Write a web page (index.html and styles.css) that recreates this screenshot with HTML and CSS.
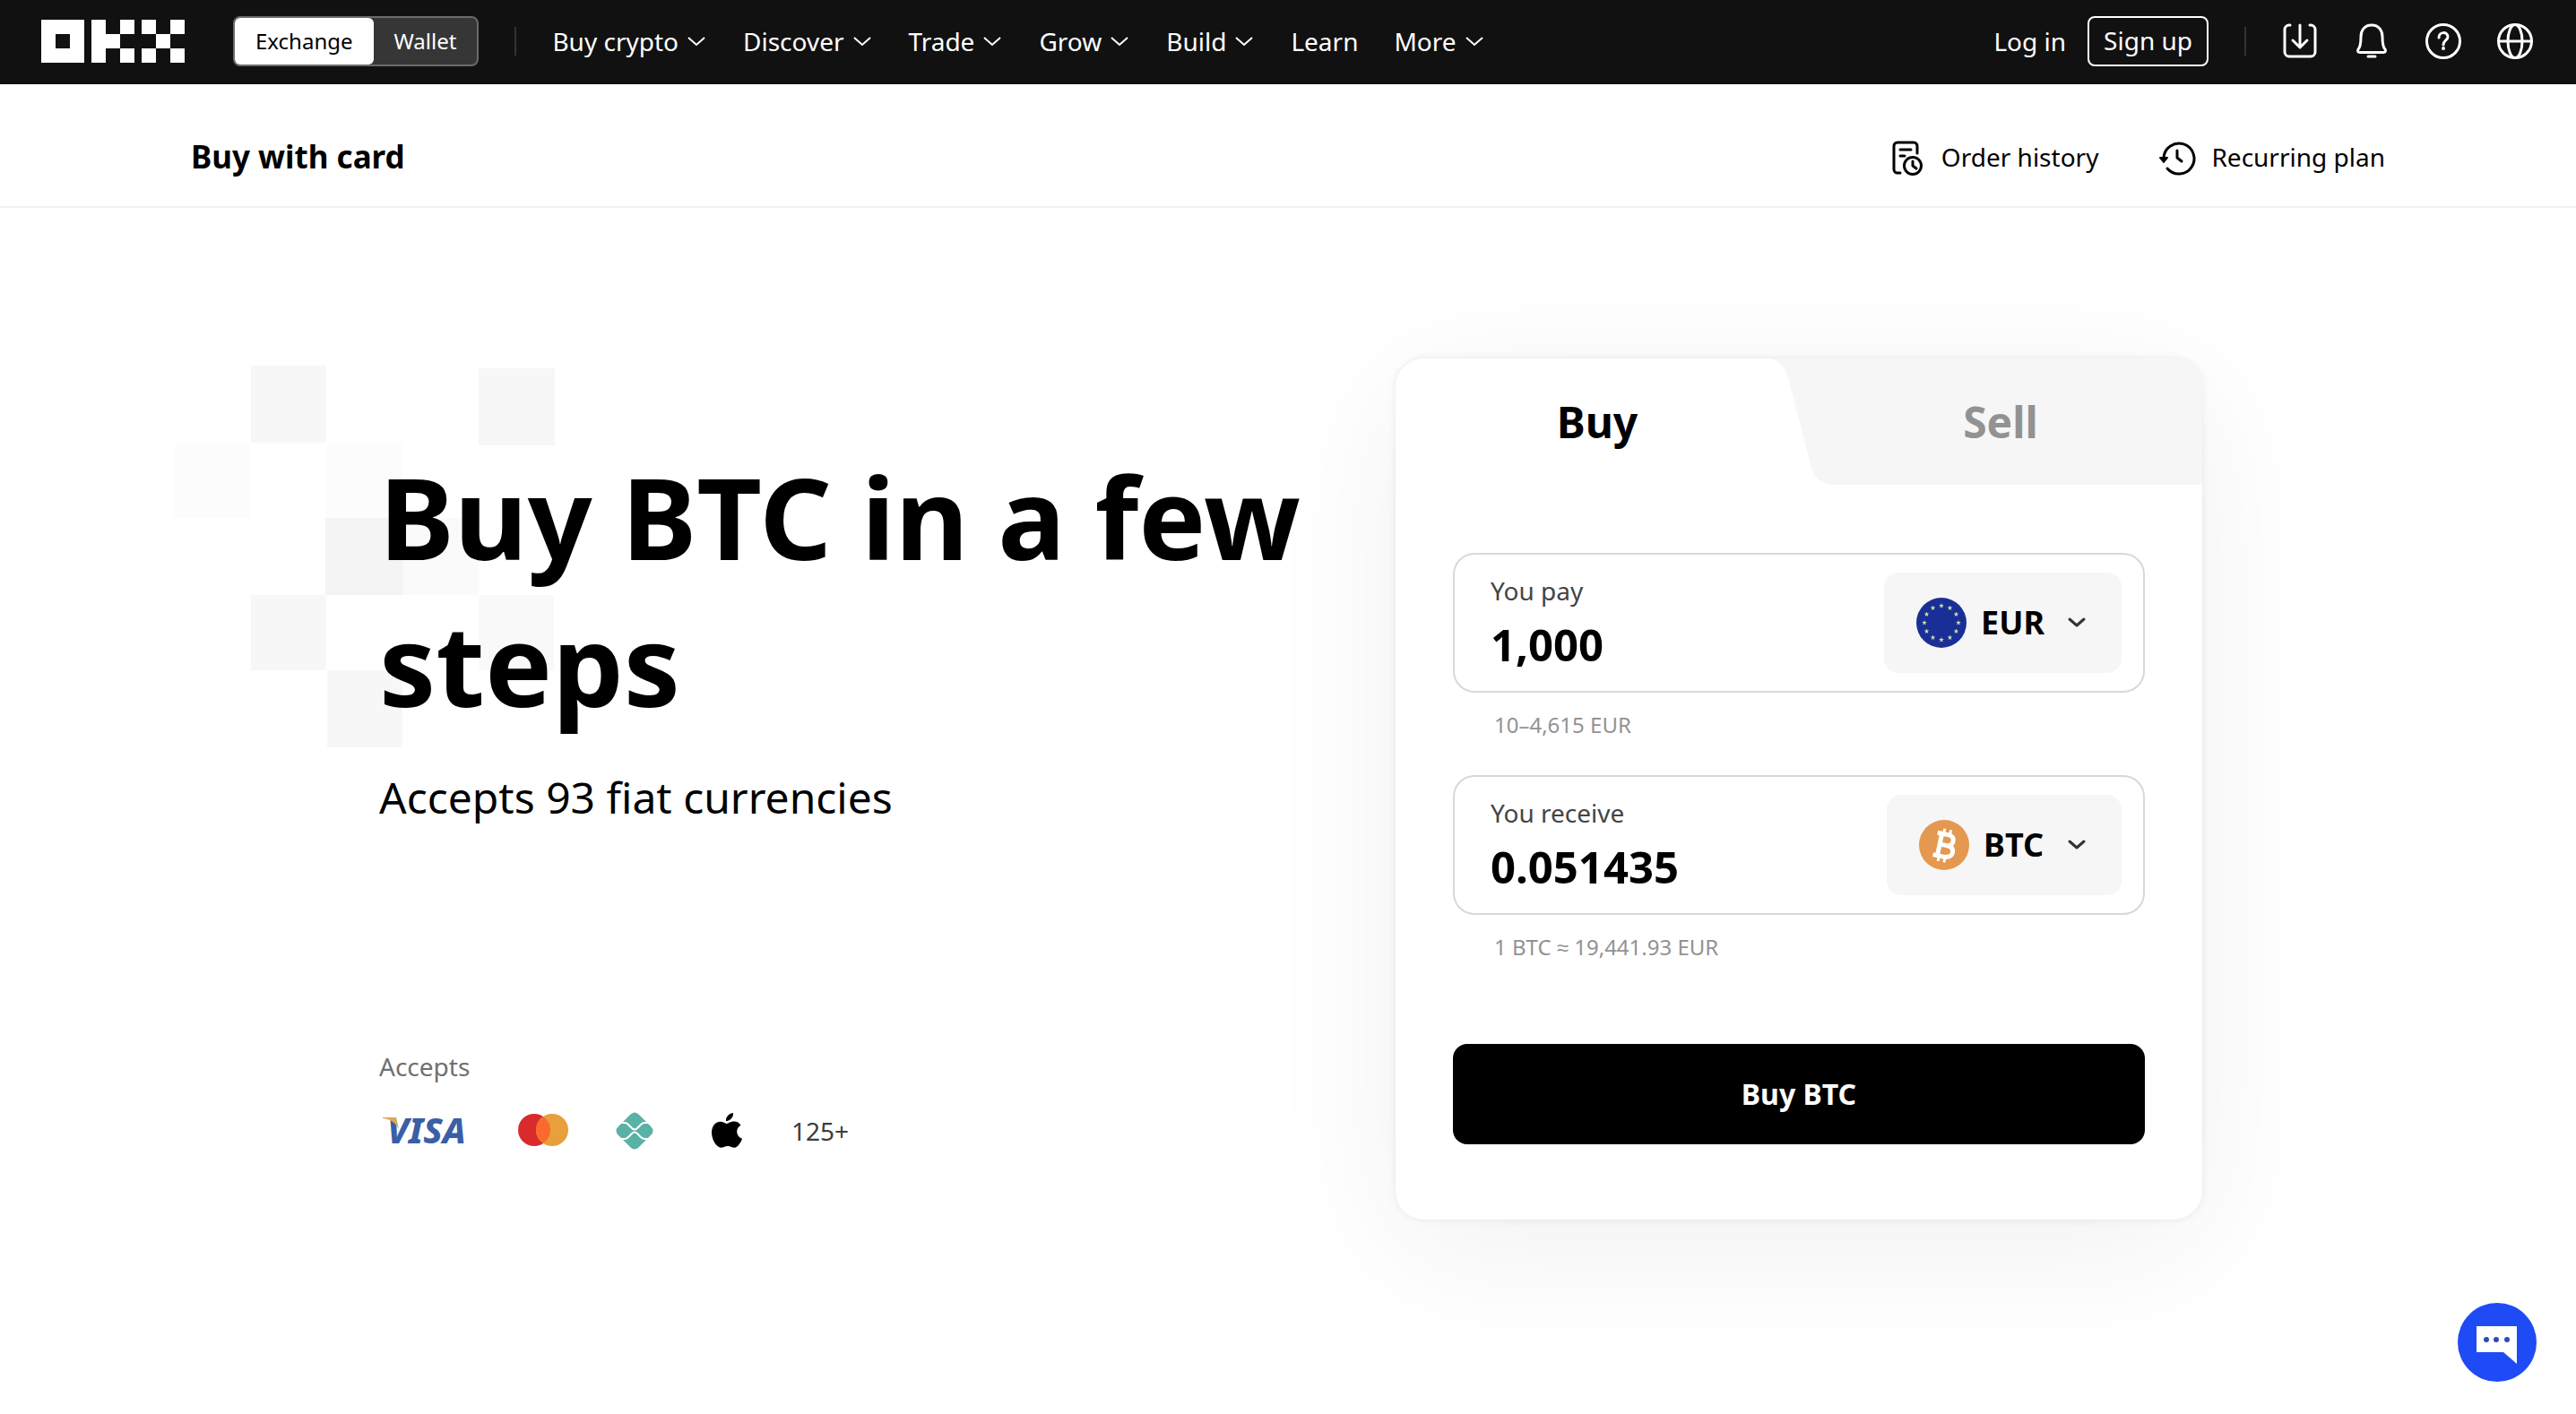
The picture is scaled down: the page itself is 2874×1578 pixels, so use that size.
FILE: index.html
```
<!DOCTYPE html>
<html lang="en">
<head>
  <meta charset="UTF-8">
  <meta name="viewport" content="width=device-width, initial-scale=1">
  <title>Buy BTC | OKX</title>
  <link rel="stylesheet" href="styles.css">
</head>
<body>
  <svg class="defs" aria-hidden="true">
    <symbol id="chevron" viewBox="0 0 24 24">
      <path d="M3 8l9 8 9-8" fill="none" stroke="currentColor" stroke-width="2"/>
    </symbol>
    <symbol id="chevron-bold" viewBox="0 0 32 32">
      <path d="M8 12l8 7 8-7" fill="none" stroke="currentColor" stroke-width="3" stroke-linecap="round" stroke-linejoin="round"/>
    </symbol>
    <symbol id="star" viewBox="-10 -10 20 20">
      <path d="M0-10L2.4-3.2 9.5-3.1 3.8 1.2 5.9 8.1 0 4-5.9 8.1-3.8 1.2-9.5-3.1-2.4-3.2z"/>
    </symbol>
  </svg>

  <header class="navbar">
    <a href="#" class="logo" aria-label="OKX">
      <svg width="160" height="48" viewBox="0 0 160 48" fill="#fff" shape-rendering="crispEdges">
        <path d="M0 0h48v48H0zM16 16v16h16V16z" fill-rule="evenodd"/>
        <path d="M56 0h16v16h16v16H72v16H56zM88 0h16v16H88zM88 32h16v16H88z"/>
        <path d="M112 0h16v16h-16zM144 0h16v16h-16zM128 16h16v16h-16zM112 32h16v16h-16zM144 32h16v16h-16z"/>
      </svg>
    </a>

    <div class="switch">
      <button type="button" class="active">Exchange</button>
      <button type="button">Wallet</button>
    </div>

    <span class="divider"></span>

    <nav class="menu">
      <button type="button">Buy crypto <svg class="chev"><use href="#chevron"/></svg></button>
      <button type="button">Discover <svg class="chev"><use href="#chevron"/></svg></button>
      <button type="button">Trade <svg class="chev"><use href="#chevron"/></svg></button>
      <button type="button">Grow <svg class="chev"><use href="#chevron"/></svg></button>
      <button type="button">Build <svg class="chev"><use href="#chevron"/></svg></button>
      <a href="#">Learn</a>
      <button type="button">More <svg class="chev"><use href="#chevron"/></svg></button>
    </nav>

    <div class="account">
      <a href="#" class="login">Log in</a>
      <a href="#" class="signup">Sign up</a>
      <span class="divider"></span>
      <div class="tools">
        <button type="button" aria-label="Download">
          <svg class="icon" viewBox="0 0 48 48">
            <path d="M13 6h-1a5 5 0 0 0-5 5v25a5 5 0 0 0 5 5h24a5 5 0 0 0 5-5V11a5 5 0 0 0-5-5h-1"/>
            <path d="M24 6v24M16 23l8 8 8-8"/>
          </svg>
        </button>
        <button type="button" aria-label="Notifications">
          <svg class="icon" viewBox="0 0 48 48">
            <path d="M24 6c-8 0-12 6-12 13 0 8-1 12-3 14-1 2-0.500 3.500 2 3.500h26c2.500 0 3-1.500 2-3.500-2-2-3-6-3-14 0-7-4-13-12-13z"/>
            <path d="M20 41h8"/>
          </svg>
        </button>
        <button type="button" aria-label="Help">
          <svg class="icon" viewBox="0 0 48 48">
            <circle cx="24" cy="24" r="18.500"/>
            <path d="M19 20c0-7 10-7 10-1 0 4-5 4-5 9"/>
            <circle class="dot" cx="24" cy="32" r="2"/>
          </svg>
        </button>
        <button type="button" aria-label="Language">
          <svg class="icon" viewBox="0 0 48 48">
            <circle cx="24" cy="24" r="18.500"/>
            <ellipse cx="24" cy="24" rx="8" ry="18.500"/>
            <path d="M6 24h36"/>
          </svg>
        </button>
      </div>
    </div>
  </header>

  <div class="subbar">
    <div class="container subbar-inner">
      <h2>Buy with card</h2>
      <div class="links">
        <a href="#">
          <svg class="icon" viewBox="0 0 48 48">
            <path d="M16 42h-3a4 4 0 0 1-4-4V12a4 4 0 0 1 4-4h18a4 4 0 0 1 4 4v8"/>
            <path d="M16 16h12M16 23h5"/>
            <circle cx="30" cy="34" r="9.500"/>
            <path d="M30 29v5l4 3"/>
          </svg>
          Order history
        </a>
        <a href="#">
          <svg class="icon" viewBox="0 0 48 48">
            <path d="M9 25a17 17 0 1 1 4 12"/>
            <path d="M5 25h8l-4 5z" fill="currentColor" stroke-width="2"/>
            <path d="M24 17v8l5 4"/>
          </svg>
          Recurring plan
        </a>
      </div>
    </div>
  </div>

  <main class="container hero">
    <section class="intro">
      <svg class="pixels" width="425" height="426" viewBox="0 0 425 426" aria-hidden="true">
        <g fill="#f7f7f7">
          <rect x="85" y="0" width="84" height="86"/>
          <rect x="339" y="3" width="85" height="86"/>
          <rect x="85" y="256" width="84" height="84"/>
          <rect x="170" y="340" width="84" height="86"/>
        </g>
        <g fill="#fcfcfc">
          <rect x="0" y="88" width="84" height="82"/>
          <rect x="170" y="88" width="84" height="82"/>
        </g>
        <rect x="168" y="170" width="86" height="86" fill="#f4f4f4"/>
        <rect x="254" y="170" width="85" height="86" fill="#fafafa"/>
        <rect x="339" y="256" width="84" height="84" fill="#f9f9f9"/>
      </svg>

      <h1>Buy BTC in a few steps</h1>
      <p class="lead">Accepts 93 fiat currencies</p>

      <div class="accepts">
        <p>Accepts</p>
        <ul>
          <li>
            <svg width="108" height="64" viewBox="0 0 108 64" role="img" aria-label="Visa">
              <text x="9" y="46" class="visa">VISA</text>
              <path d="M4 17h15l3 13C18 23 13 19 4 18z" fill="#d9a958"/>
            </svg>
          </li>
          <li>
            <svg width="64" height="64" viewBox="0 0 64 64" role="img" aria-label="Mastercard">
              <circle cx="25" cy="31" r="18" fill="#d92b2b"/>
              <circle cx="45" cy="31" r="18" fill="#e8a03c"/>
              <path d="M35 16a18 18 0 0 1 0 30 18 18 0 0 1 0-30z" fill="#fa6a2d"/>
            </svg>
          </li>
          <li>
            <svg width="64" height="64" viewBox="0 0 64 64" role="img" aria-label="Pix">
              <path d="M28 14q5-5 10 0l13 13q5 5 0 10L38 50q-5 5-10 0L15 37q-5-5 0-10z" fill="#5ab1a5"/>
              <path d="M18 23h4c2 0 3 1 4 2l4 4q3 3 6 0l4-4c1-1 2-2 4-2h5M18 41h4c2 0 3-1 4-2l4-4q3-3 6 0l4 4c1 1 2 2 4 2h5" fill="none" stroke="#fff" stroke-width="2"/>
            </svg>
          </li>
          <li>
            <svg width="64" height="64" viewBox="0 0 64 64" role="img" aria-label="Apple Pay">
              <path d="M39 12c.6 5-4 9-8 9-.5-5 4-8.500 8-9zM31.500 24c2 0 4-2.500 8.500-2.500 3 0 6 1.500 7.500 4.200-6.500 4-5.500 12.300 1.500 15-1.500 4.300-5 10-8.500 10-3 0-4-1.800-7.500-1.800S28 50.700 25.500 50.700C20.500 50.700 15 42 15 34c0-8 5-12.200 9.800-12.200 3 0 5 2.200 6.700 2.200z" fill="#000"/>
            </svg>
          </li>
          <li>125+</li>
        </ul>
      </div>
    </section>

    <form class="card">
      <div class="tabs" role="tablist">
        <svg class="tab-shape" width="487" height="141" viewBox="0 0 487 141" aria-hidden="true">
          <path d="M0 0C14 0 21 8 25 21L50 119C54 134 62 141 78 141H487V0z" fill="#f6f6f6"/>
        </svg>
        <button type="button" role="tab" aria-selected="true" class="active">Buy</button>
        <button type="button" role="tab" aria-selected="false">Sell</button>
      </div>

      <div class="card-body">
        <div class="field">
          <div class="amount">
            <label for="pay">You pay</label>
            <input id="pay" type="text" inputmode="decimal" value="1,000">
          </div>
          <div class="currency">
            <svg width="56" height="56" viewBox="0 0 56 56" aria-hidden="true">
              <circle cx="28" cy="28" r="28" fill="#1a2f96"/>
              <g id="stars" fill="#cfe0b0"></g>
            </svg>
            <select aria-label="Pay currency">
              <option>EUR</option>
            </select>
            <svg class="chev-bold"><use href="#chevron-bold"/></svg>
          </div>
        </div>
        <p class="hint">10–4,615 EUR</p>

        <div class="field">
          <div class="amount">
            <label for="receive">You receive</label>
            <input id="receive" type="text" inputmode="decimal" value="0.051435">
          </div>
          <div class="currency">
            <svg width="56" height="56" viewBox="0 0 56 56" aria-hidden="true">
              <circle cx="28" cy="28" r="28" fill="#e5984f"/>
              <g transform="rotate(12 28 28)" fill="none" stroke="#fff" stroke-width="5">
                <path d="M18 16h12q7 0 7 6t-7 6h-7 8q8 0 8 6t-8 7H18M23 16v25"/>
                <path d="M25 10v6M32 10v6M25 41v6M32 41v6" stroke-width="3"/>
              </g>
            </svg>
            <select aria-label="Receive currency">
              <option>BTC</option>
            </select>
            <svg class="chev-bold"><use href="#chevron-bold"/></svg>
          </div>
        </div>
        <p class="hint">1 BTC ≈ 19,441.93 EUR</p>

        <button type="submit" class="submit">Buy BTC</button>
      </div>
    </form>
  </main>

  <button type="button" class="chat" aria-label="Chat">
    <svg width="88" height="88" viewBox="0 0 88 88">
      <path d="M21 26h45v42L51 55H21z" fill="#fff"/>
      <g fill="#2f4bb5">
        <circle cx="32" cy="41" r="3"/>
        <circle cx="43" cy="41" r="3"/>
        <circle cx="55" cy="41" r="3"/>
      </g>
    </svg>
  </button>

  <script>
    // twelve stars in a ring on the EUR flag
    const stars = document.getElementById("stars");
    let ring = "";
    for (let i = 0; i < 12; i++) {
      const a = i * Math.PI / 6;
      const x = 28 + 19 * Math.sin(a) - 3;
      const y = 28 - 19 * Math.cos(a) - 3;
      ring += `<use href="#star" x="${x}" y="${y}" width="6" height="6"/>`;
    }
    stars.innerHTML = ring;
  </script>
</body>
</html>
```
FILE: styles.css
```
/* GENERAL */
* {
  box-sizing: border-box;
}

body {
  margin: 0;
  background: #fff;
  color: #000;
  font-family: "Noto Sans", sans-serif;
  font-size: 28px;
  line-height: 40px;
}

h1, h2, p, ul {
  margin: 0;
  padding: 0;
}

ul {
  list-style: none;
}

a {
  color: inherit;
  text-decoration: none;
}

button, input, select {
  font: inherit;
  color: inherit;
  background: none;
  border: none;
  margin: 0;
  padding: 0;
}

button, select {
  cursor: pointer;
}

svg {
  display: block;
  flex-shrink: 0;
}

.defs {
  display: none;
}

.container {
  max-width: 2448px;
  margin: 0 auto;
}

.icon {
  width: 48px;
  height: 48px;
  fill: none;
  stroke: currentColor;
  stroke-width: 3;
  stroke-linecap: round;
  stroke-linejoin: round;
}

.icon .dot {
  fill: currentColor;
  stroke: none;
}

/* NAVBAR */
.navbar {
  display: flex;
  align-items: center;
  height: 94px;
  padding: 0 44px 2px 46px;
  background: #111;
  color: #fff;
}

.switch {
  display: flex;
  height: 56px;
  margin: 0 40px 0 54px;
  border: 2px solid #6b6b6b;
  border-radius: 8px;
  background: #363636;
  font-size: 24px;
}

.switch button {
  padding: 0 23px;
  border-radius: 6px;
}

.switch .active {
  background: #fff;
  color: #000;
}

.divider {
  width: 2px;
  height: 32px;
  background: #333;
}

.menu {
  display: flex;
  align-items: center;
  gap: 40px;
  margin-left: 40px;
}

.menu button {
  display: flex;
  align-items: center;
  gap: 8px;
}

.chev {
  width: 24px;
  height: 24px;
}

.account {
  display: flex;
  align-items: center;
  margin-left: auto;
}

.signup {
  height: 56px;
  margin: 0 40px 0 24px;
  padding: 5px 16px;
  border: 2px solid #fff;
  border-radius: 8px;
}

.tools {
  display: flex;
  gap: 32px;
  margin-left: 36px;
}

/* SUBBAR */
.subbar {
  padding-top: 26px;
  border-bottom: 2px solid #f0f0f0;
}

.subbar-inner {
  display: flex;
  align-items: center;
  justify-content: space-between;
  height: 110px;
}

.subbar h2 {
  font-size: 35px;
  font-weight: 700;
  line-height: 48px;
}

.links {
  display: flex;
  gap: 64px;
}

.links a {
  display: flex;
  align-items: center;
  gap: 14px;
}

/* HERO */
.hero {
  display: flex;
  justify-content: space-between;
  padding: 168px 204px 160px 210px;
}

.intro {
  position: relative;
  flex: 1;
  padding-top: 94px;
}

.pixels {
  position: absolute;
  top: 8px;
  left: -228px;
  z-index: -1;
}

.intro h1 {
  font-size: 126px;
  font-weight: 700;
  line-height: 164px;
}

.lead {
  margin-top: 32px;
  font-size: 48px;
  line-height: 72px;
}

.accepts {
  margin-top: 244px;
  color: #707070;
}

.accepts ul {
  display: flex;
  align-items: center;
  gap: 40px;
  margin-top: 20px;
  color: #3c3c3c;
}

.visa {
  font-size: 40px;
  font-weight: 800;
  font-style: italic;
  fill: #3a5fa5;
}

/* CARD */
.card {
  width: 900px;
  border-radius: 32px;
  background: #fff;
  overflow: hidden;
  box-shadow: 0 0 8px rgba(0, 0, 0, 0.08), 0 32px 160px rgba(0, 0, 0, 0.06);
}

.tabs {
  position: relative;
  display: flex;
  height: 141px;
}

.tab-shape {
  position: absolute;
  top: 0;
  right: 0;
}

.tabs button {
  position: relative;
  flex: 1;
  font-size: 48px;
  font-weight: 700;
  color: #929292;
}

.tabs .active {
  color: #000;
}

.card-body {
  padding: 76px 64px 84px;
}

.field {
  display: flex;
  align-items: center;
  justify-content: space-between;
  padding: 20px 24px 20px 40px;
  border: 2px solid #d8d8d8;
  border-radius: 24px;
}

.amount {
  display: flex;
  flex: 1;
  flex-direction: column;
  gap: 8px;
  min-width: 0;
}

.amount label {
  color: #444;
}

.amount input {
  width: 100%;
  height: 64px;
  font-size: 49px;
  font-weight: 700;
  outline: none;
}

.currency {
  display: flex;
  align-items: center;
  height: 112px;
  padding: 0 34px 0 36px;
  border-radius: 16px;
  background: #f6f6f6;
}

.currency select {
  appearance: none;
  margin: 0 20px 0 16px;
  font-size: 36px;
  font-weight: 700;
  line-height: 48px;
}

.chev-bold {
  width: 32px;
  height: 32px;
  color: #333;
}

.hint {
  margin: 20px 0 40px;
  padding-left: 46px;
  color: #929292;
  font-size: 24px;
  line-height: 32px;
}

.submit {
  width: 100%;
  height: 112px;
  margin-top: 52px;
  border-radius: 16px;
  background: #000;
  color: #fff;
  font-size: 32px;
  font-weight: 700;
}

/* CHAT */
.chat {
  position: fixed;
  right: 44px;
  bottom: 36px;
  border-radius: 50%;
  background: #1e4bf5;
}
```
